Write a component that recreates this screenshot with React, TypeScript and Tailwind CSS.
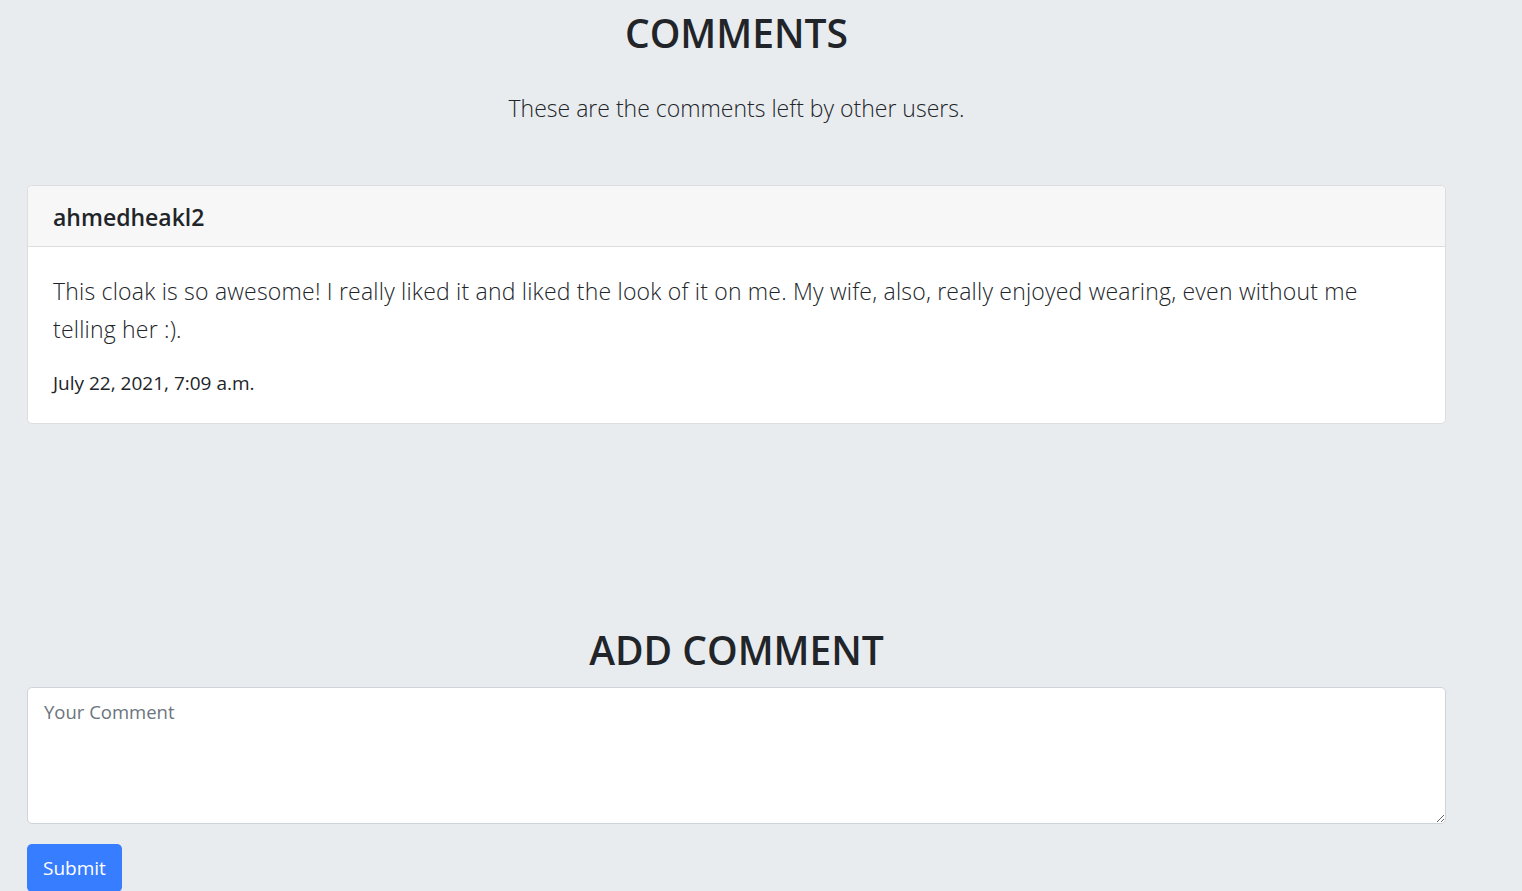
import React from "react";

const comments = [
  {
    user: "ahmedheakl2",
    body: "This cloak is so awesome! I really liked it and liked the look of it on me. My wife, also, really enjoyed wearing, even without me telling her :).",
    date: "July 22, 2021, 7:09 a.m.",
  },
];

export default function App() {
  return (
    <div className="min-h-[891px] bg-[#e9ecef] text-[#212529] font-['Open_Sans',sans-serif] overflow-hidden">
      <div className="ml-[27px] w-[1419px]">
        <h1 className="pt-[9px] text-center text-[39px] font-semibold leading-[48px]">COMMENTS</h1>
        <p className="mt-[36px] text-center text-[23px] font-light leading-[30px]">
          These are the comments left by other users.
        </p>

        <div className="mt-[62px] flex flex-col gap-4">
          {comments.map((c, i) => (
            <div key={i} className="rounded-[5px] border border-[#dcdedf] bg-white">
              <div className="flex h-[61px] items-center rounded-t-[5px] border-b border-[#dcdedf] bg-[#f7f7f7] px-[25px] pt-[1px]">
                <h4 className="text-[23px] font-semibold leading-[28px]">{c.user}</h4>
              </div>
              <div className="px-[25px] pt-[25px] pb-[28px]">
                <p className="text-[23px] font-light leading-[38px] tracking-[0.2px]">{c.body}</p>
                <p className="mt-[23px] text-[19px] leading-[24px]">{c.date}</p>
              </div>
            </div>
          ))}
        </div>

        <h1 className="mt-[202px] text-center text-[39px] font-semibold leading-[48px]">ADD COMMENT</h1>
        <form className="mt-[13px]">
          <textarea
            placeholder="Your Comment"
            className="block h-[137px] w-full resize-y rounded-[5px] border border-[#ced4da] bg-white px-[16px] py-[10px] text-[18.5px] leading-[28px] placeholder:text-[#6c757d] outline-none"
          />
          <button
            type="button"
            className="mt-[20px] h-[48px] rounded-[5px] bg-[#377dff] px-[16px] text-[19px] text-white"
          >
            Submit
          </button>
        </form>
      </div>
    </div>
  );
}
